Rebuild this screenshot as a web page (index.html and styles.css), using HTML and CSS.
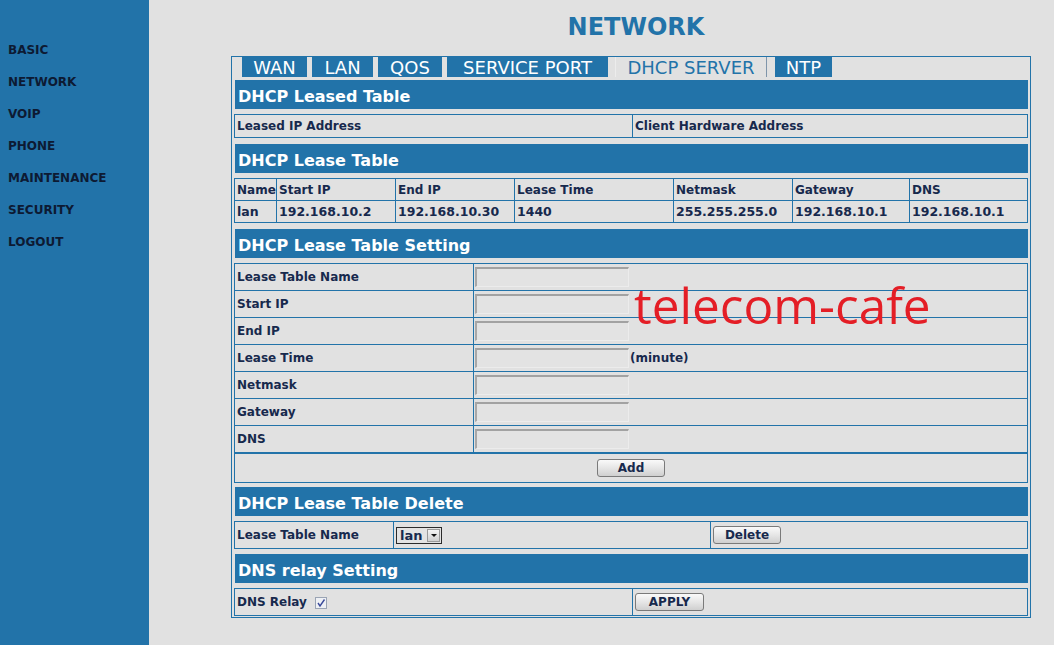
FILE: index.html
```html
<!DOCTYPE html>
<html lang="en">
<head>
    <meta charset="UTF-8">
    <title>NETWORK</title>
    <link rel="stylesheet" href="styles.css">
</head>
<body>
    <!-- Menu lateral -->
    <div class="sidebar">
        <a class="menu-item">BASIC</a>
        <a class="menu-item">NETWORK</a>
        <a class="menu-item">VOIP</a>
        <a class="menu-item">PHONE</a>
        <a class="menu-item">MAINTENANCE</a>
        <a class="menu-item">SECURITY</a>
        <a class="menu-item">LOGOUT</a>
    </div>

    <div class="main">
        <h1 class="page-title">NETWORK</h1>

        <div class="frame">
            <div class="tabs">
                <span class="tab tab-wan">WAN</span>
                <span class="tab tab-lan">LAN</span>
                <span class="tab tab-qos">QOS</span>
                <span class="tab tab-port">SERVICE PORT</span>
                <span class="tab tab-dhcp active">DHCP SERVER</span>
                <span class="tab tab-ntp">NTP</span>
            </div>

            <div class="content">
                <!-- DHCP Leased Table -->
                <div class="section-title">DHCP Leased Table</div>
                <table class="grid leased">
                    <colgroup><col class="w-half"><col></colgroup>
                    <tr>
                        <td>Leased IP Address</td>
                        <td>Client Hardware Address</td>
                    </tr>
                </table>

                <!-- DHCP Lease Table -->
                <div class="section-title">DHCP Lease Table</div>
                <table class="grid lease">
                    <colgroup>
                        <col class="w-name">
                        <col class="w-ip">
                        <col class="w-ip">
                        <col class="w-time">
                        <col class="w-ip">
                        <col class="w-gw">
                        <col>
                    </colgroup>
                    <tr>
                        <td>Name</td>
                        <td>Start IP</td>
                        <td>End IP</td>
                        <td>Lease Time</td>
                        <td>Netmask</td>
                        <td>Gateway</td>
                        <td>DNS</td>
                    </tr>
                    <tr class="values">
                        <td>lan</td>
                        <td>192.168.10.2</td>
                        <td>192.168.10.30</td>
                        <td>1440</td>
                        <td>255.255.255.0</td>
                        <td>192.168.10.1</td>
                        <td>192.168.10.1</td>
                    </tr>
                </table>

                <!-- DHCP Lease Table Setting -->
                <div class="section-title">DHCP Lease Table Setting</div>
                <table class="grid setting">
                    <colgroup><col class="w-label"><col></colgroup>
                    <tr><td>Lease Table Name</td><td><input class="field" type="text"></td></tr>
                    <tr><td>Start IP</td><td><input class="field" type="text"></td></tr>
                    <tr><td>End IP</td><td><input class="field" type="text"></td></tr>
                    <tr><td>Lease Time</td><td><input class="field" type="text"><span class="unit">(minute)</span></td></tr>
                    <tr><td>Netmask</td><td><input class="field" type="text"></td></tr>
                    <tr><td>Gateway</td><td><input class="field" type="text"></td></tr>
                    <tr><td>DNS</td><td><input class="field" type="text"></td></tr>
                    <tr class="add-row"><td colspan="2"><button class="btn btn-add">Add</button></td></tr>
                </table>

                <!-- DHCP Lease Table Delete -->
                <div class="section-title">DHCP Lease Table Delete</div>
                <table class="grid delete">
                    <colgroup><col class="w-dlabel"><col class="w-dselect"><col></colgroup>
                    <tr>
                        <td>Lease Table Name</td>
                        <td>
                            <span class="select">
                                <span class="select-value">lan</span>
                                <span class="select-arrow"></span>
                            </span>
                        </td>
                        <td><button class="btn btn-delete">Delete</button></td>
                    </tr>
                </table>

                <!-- DNS relay Setting -->
                <div class="section-title">DNS relay Setting</div>
                <table class="grid relay">
                    <colgroup><col class="w-half"><col></colgroup>
                    <tr>
                        <td>DNS Relay
                            <span class="check">
                                <svg width="10" height="10" viewBox="0 0 10 10"><path d="M2 5 L4 8 L8.5 1.5" fill="none" stroke="#3a4a9a" stroke-width="1.4"/></svg>
                            </span>
                        </td>
                        <td><button class="btn btn-apply">APPLY</button></td>
                    </tr>
                </table>
            </div>
        </div>

        <!-- marca d'agua -->
        <div class="watermark">telecom-cafe</div>
    </div>
</body>
</html>
```

FILE: styles.css
```css
/* Layout geral */
body {
    margin: 0;
    font-family: "DejaVu Sans", Verdana, sans-serif;
    background-color: #e1e1e1;
    color: #17294d;
    display: flex;
    min-height: 645px;
}

.sidebar {
    width: 149px;
    flex-shrink: 0;
    background-color: #2273a9;
    padding-top: 43px;
    box-sizing: border-box;
}

.menu-item {
    display: block;
    height: 32px;
    padding-left: 8px;
    font-size: 12px;
    font-weight: bold;
    color: #0d1a33;
    line-height: 14px;
}

.main {
    flex: 1;
    position: relative;
}

.page-title {
    margin: 12px 0 0 87px;
    width: 800px;
    height: 44px;
    text-align: center;
    font-size: 24px;
    color: #2273a9;
    line-height: 30px;
}

/* Moldura e abas */
.frame {
    margin-left: 82px;
    width: 800px;
    height: 562px;
    box-sizing: border-box;
    border: 1px solid #2273a9;
}

.tabs {
    display: flex;
    gap: 5px;
    padding-left: 10px;
    height: 20px;
}

.tab {
    background-color: #2273a9;
    color: #ffffff;
    font-size: 18px;
    line-height: 22px;
    height: 20px;
    text-align: center;
    overflow: hidden;
    box-sizing: border-box;
}

.tab-wan { width: 65px; }
.tab-lan { width: 61px; }
.tab-qos { width: 64px; }
.tab-port { width: 161px; }
.tab-dhcp { width: 152px; margin-left: 2px; }
.tab-ntp { width: 57px; margin-left: 3px; }

.tab.active {
    background-color: #e1e1e1;
    color: #2273a9;
    border-left: 1px solid #ececec;
    border-right: 1px solid #7f95aa;
}

.content {
    padding: 3px 2px 0 2px;
}

.section-title {
    margin: 0 0 5px 1px;
    height: 29px;
    background-color: #2273a9;
    color: #ffffff;
    font-size: 16px;
    font-weight: bold;
    line-height: 33px;
    padding-left: 3px;
}

/* Tabelas */
.grid {
    width: 100%;
    table-layout: fixed;
    border-collapse: collapse;
    margin-bottom: 6px;
    font-size: 12px;
    font-weight: bold;
}

.grid td {
    border: 1px solid #2273a9;
    padding: 0 2px;
    white-space: nowrap;
}

.w-half { width: 398px; }
.w-name { width: 42px; }
.w-ip { width: 119px; }
.w-time { width: 159px; }
.w-gw { width: 117px; }
.w-label { width: 239px; }
.w-dlabel { width: 159px; }
.w-dselect { width: 317px; }

.leased td {
    height: 22px;
}

.lease td {
    height: 21px;
}

.lease .values td {
    font-size: 12.5px;
}

.setting {
    margin-bottom: 4px;
}

.setting td {
    height: 26px;
}

.setting td:nth-child(2) {
    padding-left: 1px;
}

.field {
    width: 154px;
    height: 20px;
    box-sizing: border-box;
    margin: 0;
    vertical-align: middle;
    background-color: #e3e3e3;
    border-style: solid;
    border-width: 2px 1px 1px 2px;
    border-color: #a2a2a2 #ececec #ececec #a8a8a8;
}

.unit {
    margin-left: 1px;
    vertical-align: middle;
}

.add-row td {
    height: 28px;
    text-align: center;
    border-top-width: 2px;
}

/* Botoes */
.btn {
    font-family: "DejaVu Sans", Verdana, sans-serif;
    font-size: 12px;
    font-weight: bold;
    color: #17294d;
    height: 18px;
    padding: 0;
    border: 1px solid #7a7a7a;
    border-radius: 3px;
    background: linear-gradient(#fafafa, #e6e6e6 50%, #cfcfcf);
    line-height: 14px;
    vertical-align: middle;
}

.btn-add {
    width: 68px;
}

.btn-delete {
    width: 68px;
}

.btn-apply {
    width: 69px;
}

.delete {
    margin-bottom: 5px;
}

.delete td {
    height: 26px;
}

.select {
    display: inline-flex;
    align-items: center;
    width: 46px;
    height: 17px;
    box-sizing: border-box;
    border: 1px solid #2b2b2b;
    vertical-align: middle;
    background-color: #e3e3e3;
}

.select-value {
    flex: 1;
    padding-left: 3px;
    font-size: 13px;
    line-height: 15px;
}

.select-arrow {
    width: 13px;
    height: 13px;
    margin-right: 1px;
    box-sizing: border-box;
    border: 1px solid #9a9a9a;
    background: linear-gradient(#f4f4f4, #cfcfcf);
    position: relative;
}

.select-arrow::after {
    content: "";
    position: absolute;
    left: 3px;
    top: 4px;
    border-left: 3px solid transparent;
    border-right: 3px solid transparent;
    border-top: 3px solid #111;
}

.relay td {
    height: 26px;
}

.check {
    display: inline-flex;
    align-items: center;
    justify-content: center;
    width: 12px;
    height: 12px;
    box-sizing: border-box;
    border: 1px solid #9aa4b4;
    background-color: #eef0f4;
    margin-left: 4px;
    vertical-align: middle;
}

/* Marca d'agua sobre o conteudo */
.watermark {
    position: absolute;
    left: 485px;
    top: 275px;
    font-family: "Open Sans", "Noto Sans", sans-serif;
    font-size: 49.5px;
    color: #e41e26;
    line-height: 60px;
}
```
